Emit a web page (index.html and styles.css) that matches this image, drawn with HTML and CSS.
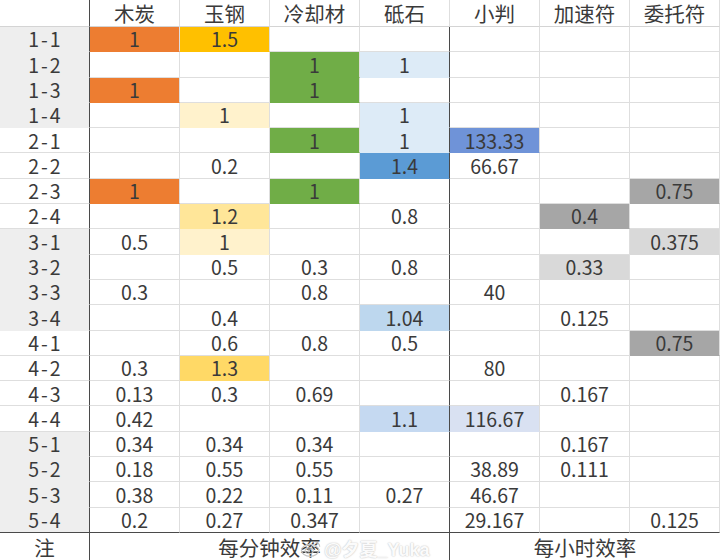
FILE: index.html
```html
<!DOCTYPE html>
<html lang="zh-CN">
<head>
<meta charset="utf-8">
<title>效率表</title>
<link rel="stylesheet" href="styles.css">
</head>
<body>
<div class="sheet">
  <div class="c lab hd"></div>
  <div class="c hd">木炭</div>
  <div class="c hd">玉钢</div>
  <div class="c hd">冷却材</div>
  <div class="c hd">砥石</div>
  <div class="c hd">小判</div>
  <div class="c hd">加速符</div>
  <div class="c hd">委托符</div>

  <div class="c lab g">1-1</div>
  <div class="c or">1</div><div class="c au">1.5</div><div class="c"></div><div class="c sep"></div><div class="c"></div><div class="c"></div><div class="c"></div>

  <div class="c lab g">1-2</div>
  <div class="c"></div><div class="c"></div><div class="c gr">1</div><div class="c sep lb">1</div><div class="c"></div><div class="c"></div><div class="c"></div>

  <div class="c lab g">1-3</div>
  <div class="c or">1</div><div class="c"></div><div class="c gr">1</div><div class="c sep"></div><div class="c"></div><div class="c"></div><div class="c"></div>

  <div class="c lab g">1-4</div>
  <div class="c"></div><div class="c ly">1</div><div class="c"></div><div class="c sep lb">1</div><div class="c"></div><div class="c"></div><div class="c"></div>

  <div class="c lab">2-1</div>
  <div class="c"></div><div class="c"></div><div class="c gr">1</div><div class="c sep lb">1</div><div class="c bm">133.33</div><div class="c"></div><div class="c"></div>

  <div class="c lab">2-2</div>
  <div class="c"></div><div class="c">0.2</div><div class="c"></div><div class="c sep bl">1.4</div><div class="c">66.67</div><div class="c"></div><div class="c"></div>

  <div class="c lab">2-3</div>
  <div class="c or">1</div><div class="c"></div><div class="c gr">1</div><div class="c sep"></div><div class="c"></div><div class="c"></div><div class="c d1">0.75</div>

  <div class="c lab">2-4</div>
  <div class="c"></div><div class="c y2">1.2</div><div class="c"></div><div class="c sep">0.8</div><div class="c"></div><div class="c d1">0.4</div><div class="c"></div>

  <div class="c lab g">3-1</div>
  <div class="c">0.5</div><div class="c ly">1</div><div class="c"></div><div class="c sep"></div><div class="c"></div><div class="c"></div><div class="c d2">0.375</div>

  <div class="c lab g">3-2</div>
  <div class="c"></div><div class="c">0.5</div><div class="c">0.3</div><div class="c sep">0.8</div><div class="c"></div><div class="c d2">0.33</div><div class="c"></div>

  <div class="c lab g">3-3</div>
  <div class="c">0.3</div><div class="c"></div><div class="c">0.8</div><div class="c sep"></div><div class="c">40</div><div class="c"></div><div class="c"></div>

  <div class="c lab g">3-4</div>
  <div class="c"></div><div class="c">0.4</div><div class="c"></div><div class="c sep bx">1.04</div><div class="c"></div><div class="c">0.125</div><div class="c"></div>

  <div class="c lab">4-1</div>
  <div class="c"></div><div class="c">0.6</div><div class="c">0.8</div><div class="c sep">0.5</div><div class="c"></div><div class="c"></div><div class="c d1">0.75</div>

  <div class="c lab">4-2</div>
  <div class="c">0.3</div><div class="c y3">1.3</div><div class="c"></div><div class="c sep"></div><div class="c">80</div><div class="c"></div><div class="c"></div>

  <div class="c lab">4-3</div>
  <div class="c">0.13</div><div class="c">0.3</div><div class="c">0.69</div><div class="c sep"></div><div class="c"></div><div class="c">0.167</div><div class="c"></div>

  <div class="c lab">4-4</div>
  <div class="c">0.42</div><div class="c"></div><div class="c"></div><div class="c sep bv">1.1</div><div class="c bp">116.67</div><div class="c"></div><div class="c"></div>

  <div class="c lab g">5-1</div>
  <div class="c">0.34</div><div class="c">0.34</div><div class="c">0.34</div><div class="c sep"></div><div class="c"></div><div class="c">0.167</div><div class="c"></div>

  <div class="c lab g">5-2</div>
  <div class="c">0.18</div><div class="c">0.55</div><div class="c">0.55</div><div class="c sep"></div><div class="c">38.89</div><div class="c">0.111</div><div class="c"></div>

  <div class="c lab g">5-3</div>
  <div class="c">0.38</div><div class="c">0.22</div><div class="c">0.11</div><div class="c sep">0.27</div><div class="c">46.67</div><div class="c"></div><div class="c"></div>

  <div class="c lab g last">5-4</div>
  <div class="c last">0.2</div><div class="c last">0.27</div><div class="c last">0.347</div><div class="c sep last"></div><div class="c last">29.167</div><div class="c last"></div><div class="c last">0.125</div>

  <div class="c lab ft">注</div>
  <div class="c ft sep span4">每分钟效率</div>
  <div class="c ft span3">每小时效率</div>

  <div class="wm">
    <svg class="wm-logo" viewBox="0 0 24 20" width="22" height="19">
      <ellipse cx="11" cy="12" rx="9.5" ry="6.5" fill="none" stroke="#c4c4c4" stroke-width="1.3"/>
      <ellipse cx="10" cy="12.5" rx="4.5" ry="3.2" fill="none" stroke="#c4c4c4" stroke-width="1.2"/>
      <circle cx="9.5" cy="13" r="1.3" fill="#c4c4c4"/>
      <path d="M17 3.5 a4.5 4.5 0 0 1 4.5 4.5" fill="none" stroke="#c4c4c4" stroke-width="1.3"/>
    </svg>
    <span class="wm-text">@夕夏_Yuka</span>
  </div>
</div>
</body>
</html>
```
FILE: styles.css
```css
* { box-sizing: border-box; }

html, body {
  margin: 0;
  padding: 0;
  background: #ffffff;
}

.sheet {
  position: relative;
  width: 720px;
  height: 560px;
  display: grid;
  grid-template-columns: repeat(8, 90px);
  grid-template-rows: 27px repeat(20, 25.3px) 27px;
  font-family: "Noto Sans CJK SC", "Noto Sans", sans-serif;
  font-size: 19.5px;
  color: #3a3a3a;
  overflow: hidden;
}

.c {
  display: flex;
  align-items: center;
  justify-content: center;
  border-right: 1px solid #dedede;
  border-bottom: 1px solid #dedede;
  line-height: 1;
  white-space: nowrap;
}

.hd {
  font-size: 20.5px;
  border-bottom-color: #d4d4d4;
  padding-top: 1px;
}

.lab {
  border-right: 1px solid #4a4a4a;
  letter-spacing: 2px;
  padding-left: 2px;
}
.sep { border-right: 1px solid #4a4a4a; }
.hd.lab { border-right-color: #4a4a4a; }

.g { background: #eeeeee; border-bottom-color: #eeeeee; }

.last { border-bottom: 1px solid #4a4a4a; }
.g.last { border-bottom-color: #4a4a4a; }

.ft {
  font-size: 20.5px;
  border-bottom: none;
  padding-top: 1px;
}
.ft.lab { letter-spacing: 0; padding-left: 0; }
.span4 { grid-column: span 4; }
.span3 { grid-column: span 3; border-right: none; }

/* fills */
.or { background: #ed7d31; border-bottom-color: #ed7d31; }
.au { background: #ffc000; border-bottom-color: #ffc000; }
.gr { background: #70ad47; border-bottom-color: #70ad47; }
.lb { background: #ddebf7; border-bottom-color: #ddebf7; }
.ly { background: #fff2cc; border-bottom-color: #fff2cc; }
.y2 { background: #ffe699; border-bottom-color: #ffe699; }
.y3 { background: #ffd966; border-bottom-color: #ffd966; }
.bl { background: #5b9bd5; border-bottom-color: #5b9bd5; }
.bm { background: #6f93d8; border-bottom-color: #6f93d8; }
.bx { background: #bdd7ee; border-bottom-color: #bdd7ee; }
.bv { background: #c5d9f1; border-bottom-color: #c5d9f1; }
.bp { background: #d9e1f2; border-bottom-color: #d9e1f2; }
.d1 { background: #a6a6a6; border-bottom-color: #a6a6a6; }
.d2 { background: #d9d9d9; border-bottom-color: #d9d9d9; }

/* watermark */
.wm {
  position: absolute;
  left: 300px;
  top: 535px;
  display: flex;
  align-items: center;
  gap: 2px;
  pointer-events: none;
}

.wm-text {
  font-family: "Liberation Sans", "Noto Sans CJK SC", sans-serif;
  font-size: 18px;
  font-weight: bold;
  color: rgba(255, 255, 255, 0.95);
  text-shadow: 0 0 1px #c8c8c8, 0 0 2px #d0d0d0;
}
```
